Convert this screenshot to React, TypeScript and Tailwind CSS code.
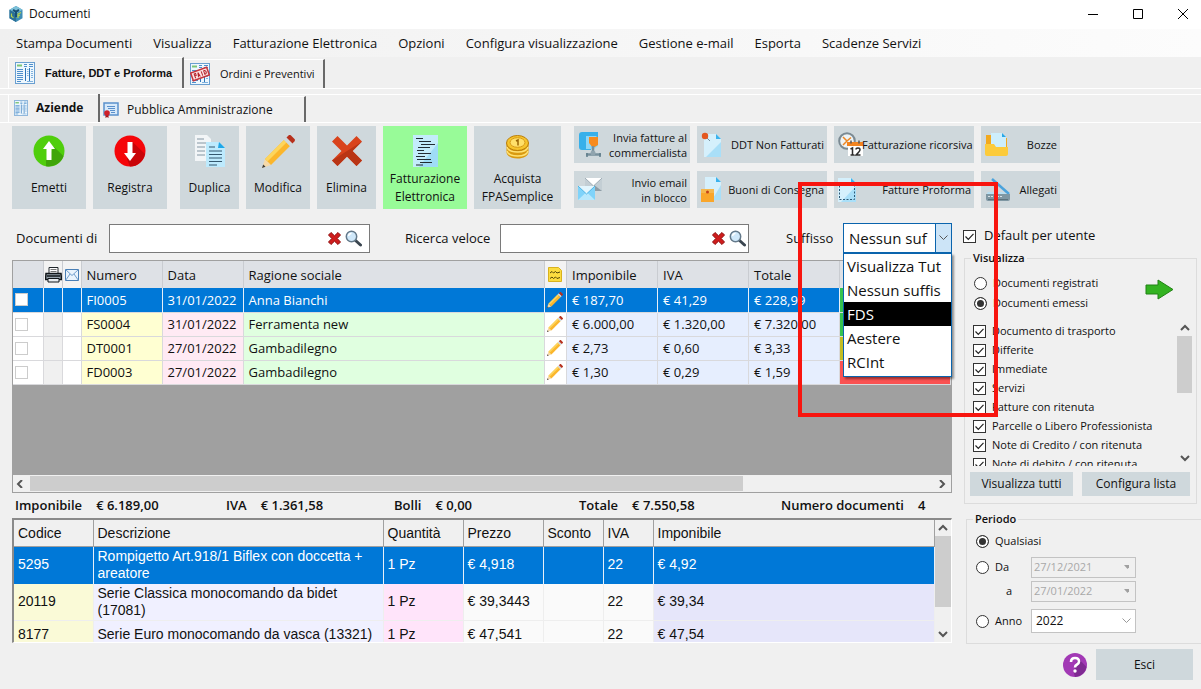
import type { ReactNode } from "react";
import clsx from "clsx";

/* ---------- icons ---------- */

const LogoIcon = () => (
  <svg width="14" height="16" viewBox="0 0 14 16" aria-hidden="true">
    <path d="M7 0l6.5 3.8v8.4L7 16 .5 12.2V3.8z" fill="#3f8db5" />
    <path d="M7 0l6.5 3.8L7 7.5.5 3.8z" fill="#7cc0d8" />
    <path d="M.5 3.8L7 7.5V16L.5 12.2z" fill="#2b6f96" />
    <path d="M4 4l3 1.600 3-1.600M7 6v5" stroke="#174e73" strokeWidth="2" fill="none" />
    <path d="M2.500 7.500v3l2 1.200M9 12v-4l3-1.500M9 10l2-1" stroke="#b8d24a" strokeWidth="1.200" fill="none" />
  </svg>
);

const Sheet = () => (
  <>
    <rect x=".5" y=".5" width="19" height="21" fill="#eef7fd" stroke="#6a9fd0" />
    <path d="M2 3.500h5" stroke="#7cc576" strokeWidth="2" />
    <path d="M9 2.500h3M14 2.500h4M9 4.500h3M14 4.500h4" stroke="#4f8fcb" />
    <path d="M2 7.500h6M2 9.500h6M2 11.500h6M2 13.500h6M2 15.500h6M2 17.500h6" stroke="#4f8fcb" />
    <path d="M10.500 6v13M14.500 6v13" stroke="#2f76b9" />
    <path d="M12 7.500h1.500M12 9.500h1.500M12 11.500h1.500M12 13.500h1.500M16 7.500h2M16 9.500h2M16 11.500h2M16 13.500h2M16 15.500h2M12 19.500h6" stroke="#7fb1de" />
    <path d="M2 19.500h4" stroke="#4f8fcb" />
  </>
);

const SheetIcon = ({ small = false }: { small?: boolean }) => (
  <svg width={small ? 14 : 20} height={small ? 16 : 22} viewBox="0 0 20 22" className="shrink-0" aria-hidden="true">
    <Sheet />
  </svg>
);

const PaidIcon = () => (
  <svg width="20" height="22" viewBox="0 0 20 22" aria-hidden="true">
    <Sheet />
    <g transform="rotate(-20 10 11)">
      <rect x="1.500" y="7" width="17" height="8" fill="#fbe3e3" stroke="#c6343c" strokeWidth="1.500" />
      <path d="M4.500 13.500V9h1.500v2H4.500M7.500 13.500l1-4.500 1 4.500M8 12h1M12 9v4.500M14.500 9v4q2 0 2-2t-2-2" stroke="#b5222b" fill="none" />
    </g>
  </svg>
);

const CertificateIcon = () => (
  <svg width="16" height="16" viewBox="0 0 16 16" aria-hidden="true">
    <rect x="1" y="1" width="14" height="12" fill="#d7e9fa" stroke="#5a90cc" strokeWidth="1.500" />
    <path d="M4 4.500h8M5 6.500h7M7 8.500h5M8 10.500h4" stroke="#5a90cc" />
    <path d="M2.500 11v5l1.500-1 1.500 1v-5z" fill="#a3151c" />
    <circle cx="4" cy="11" r="2.800" fill="#cf1f28" />
  </svg>
);

const UpIcon = () => (
  <svg width="32" height="32" viewBox="0 0 32 32" aria-hidden="true">
    <circle cx="16" cy="16" r="15.500" fill="#4fce0c" />
    <path d="M21 12l9.500 9A15.500 15.500 0 0113 31.200V25z" fill="#3fa50a" />
    <path d="M16 6l6 8h-3.500v11h-5V14H10z" fill="#fff" />
  </svg>
);

const DownIcon = () => (
  <svg width="32" height="32" viewBox="0 0 32 32" aria-hidden="true">
    <circle cx="16" cy="16" r="15.500" fill="#f50509" />
    <path d="M18.500 7l12.500 12A15.500 15.500 0 0116 31.500L13 24z" fill="#c90408" />
    <path d="M16 26l6-8h-3.500V7h-5v11H10z" fill="#fff" />
  </svg>
);

const CopyIcon = () => (
  <svg width="30" height="33" viewBox="0 0 30 33" aria-hidden="true">
    <path d="M0 0h12l4 4v22H0z" fill="#f2f5f7" />
    <path d="M2 4h7M2 8h10M2 12h8M2 16h8M2 20h8" stroke="#8496a3" />
    <path d="M11 7h13l6 6v19H11z" fill="#bdeafd" />
    <path d="M24 7l6 6h-7z" fill="#1fa7e8" />
    <path d="M14 12h6M14 16h13M14 19.500h13M14 23h13M14 26.500h13M14 30h8" stroke="#33576e" />
  </svg>
);

const PencilIcon = ({ size = 33 }: { size?: number }) => (
  <svg width={size} height={size} viewBox="0 0 33 33" aria-hidden="true">
    <path d="M3 24l6 6-9 3z" fill="#f6d9a8" />
    <path d="M1.200 29.500l2.300 2.300L0 33z" fill="#3a3a3a" />
    <path d="M3 24L22 5l6 6L9 30z" fill="#fbb62c" />
    <path d="M3 24L22 5l2.500 2.500-19 19z" fill="#fdd55c" />
    <path d="M22 5l2.500-2.500 6 6L28 11z" fill="#cfd8dc" />
    <path d="M24.500 2.500L27 0q1-.5 2 .5L32.500 4q1 1 0 2.200L30.500 8.500z" fill="#b7301c" />
  </svg>
);

const CrossIcon = () => (
  <svg width="30" height="30" viewBox="0 0 30 30" aria-hidden="true">
    <path d="M5.500 0L15 9.500 24.500 0 30 5.500 20.500 15l9.500 9.500-5.500 5.500L15 20.500 5.500 30 0 24.500 9.500 15 0 5.500z" fill="#d9431c" />
    <path d="M30 5.500L20.500 15l9.500 9.500-5.500 5.500L15 20.500 5.500 30 0 24.500z" fill="#b93515" />
  </svg>
);

const XmlIcon = () => (
  <svg width="25" height="32" viewBox="0 0 25 32" aria-hidden="true">
    <path d="M0 0h25v32H0z" fill="#c3ecfb" />
    <path d="M25 8v24H6z" fill="#9fdcf6" />
    <path d="M3 3.500h7M6 6.500h12M8 9.500h14M5 12.500h12M4 15.500h7M5 18.500h13M3 21.500h9M4 24.500h14M7 27.500h12M3 30h7" stroke="#222c33" strokeWidth="1.200" />
  </svg>
);

const CoinsIcon = () => (
  <svg width="23" height="32" viewBox="0 0 23 32" aria-hidden="true">
    <path d="M.5 8v9c0 4 5 6.500 11 6.500s11-2.500 11-6.500V8z" fill="#d99a12" />
    <path d="M1 12c1 3.500 5 5 10.500 5S21 15.500 22 12M1 16c1 3.500 5 5 10.500 5S21 19.500 22 16" stroke="#ffe173" strokeWidth="1.500" fill="none" />
    <ellipse cx="11.500" cy="8" rx="11" ry="7.500" fill="#f6c42c" stroke="#b97c08" />
    <ellipse cx="11.500" cy="7.500" rx="7.500" ry="4.800" fill="#ffe06a" stroke="#d79a18" />
    <path d="M10 6l2-1v5.500" stroke="#9a6505" strokeWidth="1.500" fill="none" />
  </svg>
);

const ZipIcon = () => (
  <svg width="24" height="25" viewBox="0 0 24 25" aria-hidden="true">
    <path d="M4 0h16v5H8v9h5v4H4q-3 0-3-3V3q0-3 3-3z" fill="#37b0ea" />
    <path d="M8 4h10l2 2v8l-4 3H8z" fill="#8ed7f7" />
    <path d="M11 5h9v8l-5 3-4-5z" fill="#f68b1f" />
    <path d="M15 14v7M8 22.500h15" stroke="#78909c" strokeWidth="2.500" />
    <circle cx="15" cy="21" r="2.500" fill="#90a4ae" />
    <path d="M9 21v4M22 21v4" stroke="#607d8b" strokeWidth="1.500" />
  </svg>
);

const MailsIcon = () => (
  <svg width="25" height="23" viewBox="0 0 25 23" aria-hidden="true">
    <path d="M7 0h17v13H7z" fill="#c3ced4" />
    <path d="M7 0h17l-8.500 8z" fill="#fff" />
    <path d="M7 0l8.500 8L24 0" stroke="#a0adb5" fill="none" />
    <path d="M24 13l-8-6v6z" fill="#8e9ca5" />
    <path d="M0 8h17v14H0z" fill="#7fd3fa" />
    <path d="M0 22l8.500-8 8.500 8z" fill="#b7e8fd" />
    <path d="M0 8h17l-8.500 8z" fill="#e3f6fe" />
    <path d="M0 8l8.500 8L17 8" stroke="#4fb4e4" fill="none" />
  </svg>
);

const PinnedPageIcon = () => (
  <svg width="21" height="25" viewBox="0 0 21 25" aria-hidden="true">
    <path d="M3 2h12l5 5v18H3z" fill="#d5f0fc" />
    <path d="M20 10v15H5z" fill="#a9dff8" />
    <path d="M15 2l5 5h-5z" fill="#3bb3ee" />
    <path d="M5 5l4 4" stroke="#78909c" />
    <circle cx="4" cy="4" r="3.200" fill="#e4571f" />
  </svg>
);

const BoxPageIcon = () => (
  <svg width="20" height="25" viewBox="0 0 20 25" aria-hidden="true">
    <path d="M4 0h11l5 5v18H4z" fill="#d5f0fc" />
    <path d="M20 8v15h-9z" fill="#a9dff8" />
    <path d="M15 0l5 5h-5z" fill="#3bb3ee" />
    <path d="M0 12h13v13H0z" fill="#f9a62b" />
    <path d="M0 12h13v4H0z" fill="#f5b84e" />
    <circle cx="6.500" cy="15" r="1.500" fill="#c2421a" />
  </svg>
);

const RecurringIcon = () => (
  <svg width="25" height="25" viewBox="0 0 25 25" aria-hidden="true">
    <circle cx="9" cy="9" r="7.800" fill="#eef3f5" stroke="#7b8a93" strokeWidth="2" />
    <path d="M5 5l4 4 4-3.500M9 9l-4 4" stroke="#ee8722" strokeWidth="1.500" fill="none" />
    <path d="M10 11h15v13H10z" fill="#fff" />
    <path d="M9 10h16v4H9z" fill="#f28420" />
    <path d="M13 8.500v3M21 8.500v3" stroke="#555" strokeWidth="1.500" />
    <path d="M12.500 17l2-1v7M12.500 23h4M18 17.500q0-1.500 2-1.500t2 1.700q0 1.300-4 5.300h4.500" stroke="#2b2b2b" strokeWidth="1.500" fill="none" />
  </svg>
);

const DashedPageIcon = () => (
  <svg width="18" height="24" viewBox="0 0 18 24" aria-hidden="true">
    <path d="M0 0h13l5 5v19H0z" fill="#d5f0fc" />
    <path d="M18 8v16H3z" fill="#a9dff8" />
    <path d="M13 0l5 5h-5z" fill="#3bb3ee" />
    <path d="M1.500 7.500h15v14h-15z" fill="none" stroke="#2d5a78" strokeDasharray="2 1.500" />
  </svg>
);

const FolderIcon = () => (
  <svg width="24" height="24" viewBox="0 0 24 24" aria-hidden="true">
    <path d="M1 2h7l2 3h12v14H1z" fill="#f2a91f" />
    <path d="M6 0h11l4 4v14H6z" fill="#cdeefc" />
    <path d="M17 0l4 4h-4z" fill="#2aa8e6" />
    <path d="M0 11h9l2 3h12v7q0 2-2 2H2q-2 0-2-2z" fill="#fccb3b" />
  </svg>
);

const ScannerIcon = () => (
  <svg width="26" height="24" viewBox="0 0 26 24" aria-hidden="true">
    <path d="M7 1l17 15" stroke="#4ba3dc" strokeWidth="2.500" />
    <path d="M3 14h14l7 3H1z" fill="#b8dff3" />
    <path d="M1 16h24v5q0 2-2 2H3q-2 0-2-2z" fill="#7f97a3" />
    <path d="M3 18.500h14" stroke="#d8e2e7" strokeDasharray="2 1" />
    <path d="M3 21.500h20" stroke="#5c727d" />
  </svg>
);

const ClearIcon = () => (
  <svg width="13" height="13" viewBox="0 0 13 13" aria-hidden="true">
    <path d="M3 .5l3.500 3.300L10 .5 12.500 3 9.200 6.500l3.300 3.500L10 12.500 6.500 9.200 3 12.500.5 10l3.300-3.500L.5 3z" fill="#cf1c1c" stroke="#8f0d0d" />
  </svg>
);

const SearchIcon = () => (
  <svg width="17" height="17" viewBox="0 0 17 17" aria-hidden="true">
    <path d="M10 10l5.500 5" stroke="#3b4650" strokeWidth="3" strokeLinecap="round" />
    <circle cx="6.500" cy="6.500" r="5.200" fill="#cfe8fa" stroke="#64798a" strokeWidth="1.500" />
    <path d="M3.500 6a3 3 0 013-2.500" stroke="#fff" strokeWidth="1.500" fill="none" />
  </svg>
);

const PrinterIcon = () => (
  <svg width="17" height="17" viewBox="0 0 17 17" aria-hidden="true">
    <path d="M4 7V1.500h9V7" fill="#fff" stroke="#20262b" />
    <path d="M5.500 3.500h6M5.500 5.500h6" stroke="#777" />
    <path d="M1 7.500h15l.5 6H.5z" fill="#96a2ab" stroke="#11161a" strokeWidth="1.500" />
    <path d="M2 10h13" stroke="#11161a" strokeWidth="1.500" />
    <path d="M3 12.500h11V16H3z" fill="#e8edf0" stroke="#11161a" />
  </svg>
);

const EnvelopeIcon = () => (
  <svg width="14" height="12" viewBox="0 0 14 12" aria-hidden="true">
    <path d="M.5.5h13v11H.5z" fill="#eaf4fd" stroke="#4a7fb5" />
    <path d="M.5.5L7 6.500l6.500-6M.5 11.500L5 5M13.500 11.500L9 5" stroke="#6f9ccc" fill="none" />
  </svg>
);

const NoteIcon = () => (
  <svg width="14" height="15" viewBox="0 0 14 15" aria-hidden="true">
    <path d="M.5.5h10l3 3v11H.5z" fill="#fbdc3f" stroke="#d9b21e" />
    <path d="M2 6l2-1.500L5.500 6l2-1.500L9 6l3-1M2 11.500l2-1.500 1.500 1.500 2-1.500L9 11.500l3-1" stroke="#544808" fill="none" />
  </svg>
);

const GoIcon = () => (
  <svg width="29" height="21" viewBox="0 0 29 21" aria-hidden="true">
    <path d="M1 6h12V1l15 9.500L13 20v-5H1z" fill="#33b321" stroke="#218214" />
  </svg>
);

const HelpIcon = () => (
  <svg width="24" height="24" viewBox="0 0 24 24" aria-hidden="true">
    <circle cx="12" cy="12" r="12" fill="#a239b5" />
    <path d="M15 5l8.500 9A12 12 0 0112 24l-1.500-5z" fill="#7f2a92" />
    <path d="M8 9q0-4 4-4t4 3.500q0 2-2 3t-2 3" stroke="#fff" strokeWidth="2.600" fill="none" />
    <circle cx="12" cy="18" r="1.700" fill="#fff" />
  </svg>
);

const chevrons = {
  up: "M1 6l4-4 4 4",
  down: "M1 2l4 4 4-4",
  left: "M6 0L2 4l4 4",
  right: "M3 0l4 4-4 4",
};

const Chevron = ({ dir, className }: { dir: keyof typeof chevrons; className?: string }) => (
  <svg width="10" height="8" viewBox="0 0 10 8" className={className} aria-hidden="true">
    <path d={chevrons[dir]} fill="none" stroke="currentColor" strokeWidth="2" />
  </svg>
);

/* ---------- data ---------- */

const menu = [
  "Stampa Documenti",
  "Visualizza",
  "Fatturazione Elettronica",
  "Opzioni",
  "Configura visualizzazione",
  "Gestione e-mail",
  "Esporta",
  "Scadenze Servizi",
];

const docs = [
  { n: "FI0005", date: "31/01/2022", name: "Anna Bianchi", net: "€ 187,70", vat: "€ 41,29", total: "€ 228,99", state: "bg-[#35c34f]" },
  { n: "FS0004", date: "31/01/2022", name: "Ferramenta new", net: "€ 6.000,00", vat: "€ 1.320,00", total: "€ 7.320,00", state: "bg-[#35c34f]" },
  { n: "DT0001", date: "27/01/2022", name: "Gambadilegno", net: "€ 2,73", vat: "€ 0,60", total: "€ 3,33", state: "bg-[#c3bd22]" },
  { n: "FD0003", date: "27/01/2022", name: "Gambadilegno", net: "€ 1,30", vat: "€ 0,29", total: "€ 1,59", state: "bg-[#fa5252]" },
];

const lines = [
  { code: "5295", text: "Rompigetto Art.918/1 Biflex con doccetta + areatore", qty: "1 Pz", price: "€ 4,918", vat: "22", net: "€ 4,92" },
  { code: "20119", text: "Serie Classica monocomando da bidet (17081)", qty: "1 Pz", price: "€ 39,3443", vat: "22", net: "€ 39,34" },
  { code: "8177", text: "Serie Euro monocomando da vasca (13321)", qty: "1 Pz", price: "€ 47,541", vat: "22", net: "€ 47,54" },
];

const kinds = [
  "Documento di trasporto",
  "Differite",
  "Immediate",
  "Servizi",
  "Fatture con ritenuta",
  "Parcelle o Libero Professionista",
  "Note di Credito / con ritenuta",
  "Note di debito / con ritenuta",
];

const suffixes = ["Visualizza Tut", "Nessun suffis", "FDS", "Aestere", "RCInt"];

/* ---------- controls ---------- */

const BigButton = ({ icon, className, children }: { icon: ReactNode; className: string; children: ReactNode }) => (
  <button className={clsx("flex h-[83px] shrink-0 flex-col items-center pb-0.5 text-[12px] leading-[18px]", className)}>
    <span className="flex h-[50px] shrink-0 items-center">{icon}</span>
    <span className="-mt-2 flex w-full grow items-center justify-center">{children}</span>
  </button>
);

const SmallButton = ({ icon, children }: { icon: ReactNode; children: ReactNode }) => (
  <button className="flex h-[37px] items-center justify-between bg-[#cfd8dc] pr-[3px] pl-1 text-right text-[11px] leading-[15px] whitespace-nowrap">
    <span className="w-6 shrink-0">{icon}</span>
    <span>{children}</span>
  </button>
);

const Check = ({ children, className }: { children: ReactNode; className?: string }) => (
  <label className={clsx("flex items-center whitespace-nowrap", className)}>
    <span className="grid shrink-0">
      <input type="checkbox" defaultChecked className="peer col-start-1 row-start-1 size-[13px] appearance-none border border-[#333] bg-white" />
      <svg viewBox="0 0 13 13" className="pointer-events-none invisible col-start-1 row-start-1 size-[13px] peer-checked:visible" aria-hidden="true">
        <path d="M2.500 6.500l2.800 2.800 5.200-5.500" fill="none" stroke="#222" strokeWidth="1.200" />
      </svg>
    </span>
    {children}
  </label>
);

const Radio = ({ name, checked, children }: { name: string; checked?: boolean; children: ReactNode }) => (
  <label className="flex items-center gap-1.5">
    <input
      type="radio"
      name={name}
      defaultChecked={checked}
      className="size-[13px] shrink-0 appearance-none rounded-full border border-[#333] bg-white checked:bg-[#333] checked:shadow-[inset_0_0_0_2px_#fff]"
    />
    {children}
  </label>
);

const SearchBox = ({ id, className }: { id: string; className: string }) => (
  <div className={clsx("flex h-[29px] items-center border border-[#7a7a7a] bg-white", className)}>
    <input id={id} type="text" className="min-w-0 grow px-1 outline-none" />
    <button aria-label="Cancella" className="mr-1"><ClearIcon /></button>
    <button aria-label="Cerca"><SearchIcon /></button>
  </div>
);

const DateBox = ({ label, value }: { label: string; value: string }) => (
  <div className="flex h-[21px] items-center border border-[#c3c3c3] pr-1.5 text-[#a8a8a8]">
    <input aria-label={label} disabled defaultValue={value} className="min-w-0 grow pl-0.5" />
    <svg width="7" height="4" aria-hidden="true"><path d="M0 0h7L3.500 4z" fill="#a0a0a0" /></svg>
  </div>
);

/* ---------- sections ---------- */

const DocumentTable = () => (
  <div className="border border-[#a0a0a0] bg-[#a0a0a0]">
    <div className="h-[214px]">
      <table className="w-full table-fixed border-collapse text-left">
        <colgroup>
          <col className="w-[30px]" />
          <col className="w-[19px]" />
          <col className="w-[19px]" />
          <col className="w-[81px]" />
          <col className="w-[81px]" />
          <col />
          <col className="w-[22px]" />
          <col className="w-[91px]" />
          <col className="w-[91px]" />
          <col className="w-[91px]" />
          <col className="w-[111px]" />
        </colgroup>
        <thead>
          <tr className="h-[27px] bg-[#dee1e6] [&>th]:border-r [&>th]:border-[#c9ccd1] [&>th]:pt-0.5 [&>th]:pl-[5px] [&>th]:font-normal">
            <th />
            <th className="bg-[#f3f3f3] !pt-0 !pl-px"><PrinterIcon /></th>
            <th className="bg-[#f3f3f3] !pt-0 !pl-0.5"><EnvelopeIcon /></th>
            <th>Numero</th>
            <th>Data</th>
            <th>Ragione sociale</th>
            <th className="bg-[#f3f3f3] !pt-0 !pl-[3px]"><NoteIcon /></th>
            <th>Imponibile</th>
            <th>IVA</th>
            <th>Totale</th>
            <th />
          </tr>
        </thead>
        <tbody>
          {docs.map((d, i) => {
            const on = i === 0;
            return (
              <tr
                key={d.n}
                className={clsx(
                  "h-6 border-b border-[#d9d9dc] leading-5 whitespace-nowrap [&>td]:border-r [&>td]:pl-[5px]",
                  on ? "bg-[#0078d7] text-white [&>td]:border-[#e8f0f8]" : "[&>td]:border-[#d9d9dc]",
                )}
              >
                <td className={clsx("!pl-0.5", !on && "bg-white")}>
                  <input type="checkbox" aria-label={`Seleziona ${d.n}`} className="block size-[13px] appearance-none border border-[#ccc] bg-white" />
                </td>
                <td className={clsx(!on && "bg-[#f0f0f0]")} />
                <td className={clsx(!on && "bg-white")} />
                <td className={clsx(!on && "bg-[#ffffd2]")}>{d.n}</td>
                <td className={clsx(!on && "bg-[#ffeaf4]")}>{d.date}</td>
                <td className={clsx(!on && "bg-[#e0ffe0]")}>{d.name}</td>
                <td className={clsx("!pl-0.5", !on && "bg-white")}><PencilIcon size={16} /></td>
                <td className={clsx(!on && "bg-[#e6eefe]")}>{d.net}</td>
                <td className={clsx(!on && "bg-[#e6eefe]")}>{d.vat}</td>
                <td className={clsx(!on && "bg-[#e6eefe]")}>{d.total}</td>
                <td className={d.state} />
              </tr>
            );
          })}
        </tbody>
      </table>
    </div>
    <div className="flex h-[17px] items-center bg-[#f0f0f0] text-[#555]">
      <Chevron dir="left" className="mr-1 ml-[3px]" />
      <div className="h-full grow py-px"><div className="h-full w-[79%] bg-[#cdcdcd]" /></div>
      <Chevron dir="right" className="mx-1" />
    </div>
  </div>
);

const Sum = ({ label, value, className }: { label: string; value: string; className?: string }) => (
  <div className={clsx("flex shrink-0 gap-3.5 whitespace-nowrap", className)}>
    <dt>{label}</dt>
    <dd>{value}</dd>
  </div>
);

const LineTable = () => (
  <div className="flex h-[125px] overflow-hidden border-2 border-r border-b border-[#8a8a8a] border-r-white border-b-white font-['Liberation_Sans',Arial,sans-serif] text-[14px]">
    <table className="w-full table-fixed self-start border-collapse text-left">
      <colgroup>
        <col className="w-[79px]" />
        <col className="w-[290px]" />
        <col className="w-[80px]" />
        <col className="w-[80px]" />
        <col className="w-[60px]" />
        <col className="w-[50px]" />
        <col />
      </colgroup>
      <thead>
        <tr className="h-[26px] [&>th]:border-r [&>th]:border-b [&>th]:border-[#a0a0a0] [&>th]:pt-0.5 [&>th]:pl-1 [&>th]:font-normal">
          <th>Codice</th>
          <th>Descrizione</th>
          <th>Quantità</th>
          <th>Prezzo</th>
          <th>Sconto</th>
          <th>IVA</th>
          <th>Imponibile</th>
        </tr>
      </thead>
      <tbody>
        {lines.map((l, i) => {
          const on = i === 0;
          return (
            <tr
              key={l.code}
              className={clsx(
                "h-7 border-b leading-[17px] [&>td]:border-r [&>td]:py-px [&>td]:pl-1",
                on ? "border-[#0078d7] bg-[#0078d7] text-white [&>td]:border-[#e8f0f8]" : "border-[#eee] [&>td]:border-[#eee]",
              )}
            >
              <td className={clsx(!on && "bg-[#fafad7]")}>{l.code}</td>
              <td className={clsx(!on && "bg-[#f0f0ff]")}>{l.text}</td>
              <td className={clsx(!on && "bg-[#ffe4fa]")}>{l.qty}</td>
              <td className={clsx(!on && "bg-[#fafafa]")}>{l.price}</td>
              <td className={clsx(!on && "bg-[#fafafa]")} />
              <td className={clsx(!on && "bg-[#fafafa]")}>{l.vat}</td>
              <td className={clsx(!on && "bg-[#e6e6fa]")}>{l.net}</td>
            </tr>
          );
        })}
      </tbody>
    </table>
    <div className="flex w-4 shrink-0 flex-col items-center bg-[#f0f0f0] py-1 text-[#555]">
      <Chevron dir="up" />
      <div className="mt-1 w-full grow"><div className="h-[71px] w-full bg-[#cdcdcd]" /></div>
      <Chevron dir="down" />
    </div>
  </div>
);

const SuffixSelect = () => (
  <div className="relative h-[30px] w-[109px] text-[15px]">
    <div className="flex h-full border border-[#0a64ad] bg-white">
      <select id="suffisso" className="min-w-0 grow appearance-none overflow-hidden pl-[5px] outline-none">
        <option>Nessun suf</option>
      </select>
      <span className="flex w-4 shrink-0 items-center justify-center border-l border-[#0a64ad] bg-[#cce4f7] text-[#555]">
        <svg width="9" height="6" aria-hidden="true"><path d="M.5.5l4 4 4-4" fill="none" stroke="currentColor" /></svg>
      </span>
    </div>
    <ul role="listbox" aria-label="Suffisso" className="absolute top-full left-0 z-10 w-full border border-[#0a64ad] bg-white pb-0.5 shadow-[2px_2px_2px_#0006]">
      {suffixes.map((s) => (
        <li key={s} role="option" aria-selected={s === "FDS"} className={clsx("h-6 overflow-hidden pl-[3px] leading-6 whitespace-nowrap", s === "FDS" && "bg-black text-white")}>
          {s}
        </li>
      ))}
    </ul>
    <div className="pointer-events-none absolute -top-[41px] -left-[45px] z-20 h-[235px] w-[200px] border-4 border-[#f8150f]" />
  </div>
);

const FilterPanel = () => (
  <fieldset className="mr-1 h-[251px] border border-[#dcdcdc] text-[11px]">
    <legend className="ml-1.5 h-2.5 px-0.5 leading-[10px] font-semibold">Visualizza</legend>
    <div className="flex items-center justify-between pt-3 pr-[22px] pl-[9px]">
      <div className="flex flex-col gap-1 leading-4">
        <Radio name="stato">Documenti registrati</Radio>
        <Radio name="stato" checked>Documenti emessi</Radio>
      </div>
      <button aria-label="Applica" className="-mt-2"><GoIcon /></button>
    </div>
    <div className="mt-[9px] flex h-[146px] pr-1 pl-2">
      <ul className="grow overflow-hidden pt-0.5">
        {kinds.map((k) => (
          <li key={k}><Check className="h-[19px] gap-1.5">{k}</Check></li>
        ))}
      </ul>
      <div className="flex w-[15px] flex-col items-center py-1 text-[#555]">
        <Chevron dir="up" />
        <div className="mt-1 w-full grow"><div className="h-[57px] bg-[#cdcdcd]" /></div>
        <Chevron dir="down" />
      </div>
    </div>
    <div className="mt-1.5 flex gap-[9px] pr-1.5 pl-[5px] text-[12px]">
      <button className="h-6 w-[103px] bg-[#cfd8dc]">Visualizza tutti</button>
      <button className="h-6 grow bg-[#cfd8dc]">Configura lista</button>
    </div>
  </fieldset>
);

const PeriodPanel = () => (
  <fieldset className="ml-0.5 h-[130px] border border-r-0 border-[#dcdcdc] text-[11px]">
    <legend className="ml-1.5 h-2.5 px-0.5 leading-[10px] font-semibold">Periodo</legend>
    <div className="grid grid-cols-[46px_105px] gap-x-[9px] pt-[5px] pl-[9px]">
      <div className="col-span-2 flex h-6 items-center"><Radio name="periodo" checked>Qualsiasi</Radio></div>
      <div className="flex h-7 items-center"><Radio name="periodo">Da</Radio></div>
      <div className="flex h-7 items-center [&>div]:w-full"><DateBox label="Da" value="27/12/2021" /></div>
      <div className="flex h-5 items-center pl-[30px]">a</div>
      <div className="flex h-5 items-center [&>div]:w-full"><DateBox label="a" value="27/01/2022" /></div>
      <div className="flex h-10 items-center"><Radio name="periodo">Anno</Radio></div>
      <div className="flex h-10 items-center">
        <div className="grid h-6 w-full items-center border border-[#c3c3c3] bg-white text-[12px]">
          <select aria-label="Anno" className="col-start-1 row-start-1 w-full appearance-none pl-1"><option>2022</option></select>
          <svg width="9" height="6" className="pointer-events-none col-start-1 row-start-1 mr-1 justify-self-end" aria-hidden="true">
            <path d="M.5.5l4 4 4-4" fill="none" stroke="#999" />
          </svg>
        </div>
      </div>
    </div>
  </fieldset>
);

export default function App() {
  return (
    <div className="min-h-screen w-full overflow-hidden bg-[#f0f0f0] font-['Open_Sans','Noto_Sans',sans-serif] text-[13px] text-[#111]">
      <header className="flex h-[29px] items-center bg-white pb-0.5 pl-[9px] text-[12px]">
        <LogoIcon />
        <h1 className="ml-1.5 grow">Documenti</h1>
        <div className="flex gap-[9px] text-black">
          <button aria-label="Riduci" className="flex w-9 justify-center"><svg width="10" height="10"><path d="M0 5.500h10" stroke="currentColor" /></svg></button>
          <button aria-label="Ingrandisci" className="flex w-9 justify-center"><svg width="10" height="10"><path d="M.5.5h9v9h-9z" fill="none" stroke="currentColor" /></svg></button>
          <button aria-label="Chiudi" className="flex w-9 justify-center"><svg width="10" height="10"><path d="M0 0l10 10M10 0L0 10" stroke="currentColor" /></svg></button>
        </div>
      </header>

      <nav className="flex h-7 items-center gap-[21px] bg-linear-to-r from-[#f0f0f0] to-[#fcfcfc] pt-0.5 pl-4 whitespace-nowrap">
        {menu.map((m) => <button key={m}>{m}</button>)}
      </nav>

      <div role="tablist" className="flex h-8 items-end border-b border-white pl-2 text-[11px]">
        <button role="tab" aria-selected="true" className="flex h-[31px] w-[176px] items-center gap-2.5 border-t border-r-2 border-l border-white border-r-[#696969] pl-1.5 font-['Liberation_Sans',Arial,sans-serif] font-bold whitespace-nowrap">
          <SheetIcon />Fatture, DDT e Proforma
        </button>
        <button role="tab" aria-selected="false" className="flex h-[29px] w-[141px] items-center gap-2.5 border-t border-r-2 border-white border-r-[#696969] pl-1.5 whitespace-nowrap">
          <PaidIcon />Ordini e Preventivi
        </button>
      </div>
      <div role="tablist" className="mt-[5px] flex h-[29px] items-end border-y border-white pl-2 text-[12px]">
        <button role="tab" aria-selected="true" className="flex h-7 w-[92px] items-center gap-2 border-r-2 border-l border-white border-r-[#696969] pl-[5px] font-bold">
          <SheetIcon small />Aziende
        </button>
        <button role="tab" aria-selected="false" className="flex h-[26px] w-[206px] items-center gap-2 border-t border-r-2 border-white border-r-[#696969] pl-[3px]">
          <CertificateIcon />Pubblica Amministrazione
        </button>
      </div>

      <div className="mt-[3px] flex gap-[13px] pl-3">
        <div className="flex gap-[7px]">
          <BigButton icon={<UpIcon />} className="w-[74px] bg-[#cfd8dc]">Emetti</BigButton>
          <BigButton icon={<DownIcon />} className="w-[74px] bg-[#cfd8dc]">Registra</BigButton>
        </div>
        <div className="flex gap-[7px]">
          <BigButton icon={<CopyIcon />} className="w-[59px] bg-[#cfd8dc]">Duplica</BigButton>
          <BigButton icon={<PencilIcon />} className="w-[64px] bg-[#cfd8dc]">Modifica</BigButton>
          <BigButton icon={<CrossIcon />} className="w-[59px] bg-[#cfd8dc]">Elimina</BigButton>
          <BigButton icon={<XmlIcon />} className="w-[84px] bg-[#98fb98]">Fatturazione<br />Elettronica</BigButton>
          <BigButton icon={<CoinsIcon />} className="w-[87px] bg-[#cfd8dc]">Acquista<br />FPASemplice</BigButton>
        </div>
        <div className="grid grid-cols-[116px_130px_140px_79px] content-start gap-x-[7px] gap-y-2">
          <SmallButton icon={<ZipIcon />}>Invia fatture al<br />commercialista</SmallButton>
          <SmallButton icon={<PinnedPageIcon />}>DDT Non Fatturati</SmallButton>
          <SmallButton icon={<RecurringIcon />}>Fatturazione ricorsiva</SmallButton>
          <SmallButton icon={<FolderIcon />}>Bozze</SmallButton>
          <SmallButton icon={<MailsIcon />}>Invio email<br />in blocco</SmallButton>
          <SmallButton icon={<BoxPageIcon />}>Buoni di Consegna</SmallButton>
          <SmallButton icon={<DashedPageIcon />}>Fatture Proforma</SmallButton>
          <SmallButton icon={<ScannerIcon />}>Allegati</SmallButton>
        </div>
      </div>

      <div className="mt-3.5 flex h-[30px] items-center pl-4">
        <label htmlFor="cliente" className="w-[93px] shrink-0 pt-0.5">Documenti di</label>
        <SearchBox id="cliente" className="w-[261px] pr-[7px]" />
        <label htmlFor="ricerca" className="ml-[35px] w-[95px] shrink-0 pt-0.5">Ricerca veloce</label>
        <SearchBox id="ricerca" className="w-[249px] pr-0.5" />
        <label htmlFor="suffisso" className="ml-[37px] w-[57px] shrink-0 pt-0.5">Suffisso</label>
        <SuffixSelect />
        <Check className="ml-[11px] gap-2 pb-1">Default per utente</Check>
      </div>

      <main className="flex gap-3 pl-3">
        <div className="min-w-0 grow pt-[7px]">
          <DocumentTable />
          <dl className="flex h-[25px] items-center pt-px pl-[3px] font-semibold">
            <Sum label="Imponibile" value="€ 6.189,00" className="w-[211px]" />
            <Sum label="IVA" value="€ 1.361,58" className="w-[168px]" />
            <Sum label="Bolli" value="€ 0,00" className="w-[185px]" />
            <Sum label="Totale" value="€ 7.550,58" className="w-[202px]" />
            <Sum label="Numero documenti" value="4" />
          </dl>
          <LineTable />
        </div>
        <aside className="flex w-[237px] shrink-0 flex-col gap-2.5">
          <FilterPanel />
          <PeriodPanel />
        </aside>
      </main>

      <footer className="mt-[5px] flex items-center justify-end gap-[9px] pr-2">
        <button aria-label="Aiuto"><HelpIcon /></button>
        <button className="h-[31px] w-[97px] bg-[#cfd8dc] text-[12px]">Esci</button>
      </footer>
    </div>
  );
}
